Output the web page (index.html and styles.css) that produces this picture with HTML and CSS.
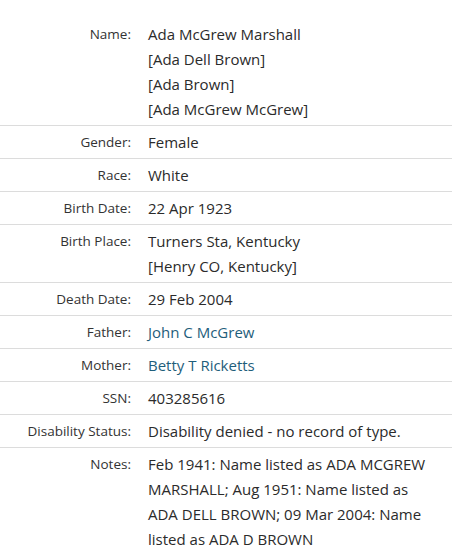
FILE: index.html
```html
<!DOCTYPE html>
<html>
<head>
<meta charset="utf-8">
<link rel="stylesheet" href="styles.css">
</head>
<body>
<div class="record">
  <div class="row">
    <div class="label">Name:</div>
    <div class="value">Ada McGrew Marshall<br>[Ada Dell Brown]<br>[Ada Brown]<br>[Ada McGrew McGrew]</div>
  </div>
  <div class="row">
    <div class="label">Gender:</div>
    <div class="value">Female</div>
  </div>
  <div class="row">
    <div class="label">Race:</div>
    <div class="value">White</div>
  </div>
  <div class="row">
    <div class="label">Birth Date:</div>
    <div class="value">22 Apr 1923</div>
  </div>
  <div class="row">
    <div class="label">Birth Place:</div>
    <div class="value">Turners Sta, Kentucky<br>[Henry CO, Kentucky]</div>
  </div>
  <div class="row">
    <div class="label">Death Date:</div>
    <div class="value">29 Feb 2004</div>
  </div>
  <div class="row">
    <div class="label">Father:</div>
    <div class="value"><a class="link" href="#">John C McGrew</a></div>
  </div>
  <div class="row">
    <div class="label">Mother:</div>
    <div class="value"><a class="link" href="#">Betty T Ricketts</a></div>
  </div>
  <div class="row">
    <div class="label">SSN:</div>
    <div class="value">403285616</div>
  </div>
  <div class="row">
    <div class="label">Disability Status:</div>
    <div class="value">Disability denied - no record of type.</div>
  </div>
  <div class="row last">
    <div class="label">Notes:</div>
    <div class="value">Feb 1941: Name listed as ADA MCGREW MARSHALL; Aug 1951: Name listed as ADA DELL BROWN; 09 Mar 2004: Name listed as ADA D BROWN</div>
  </div>
</div>
</body>
</html>
```

FILE: styles.css
```css
html, body {
  margin: 0;
  padding: 0;
  background: #ffffff;
}
body {
  font-family: "Open Sans", "Liberation Sans", sans-serif;
  color: #2b2b2b;
}
.record {
  width: 452px;
  padding-top: 18px;
}
.row {
  display: grid;
  grid-template-columns: 140px 1fr;
  padding: 4px 0 3px;
  border-bottom: 1px solid #dcdcdc;
}
.row.last {
  border-bottom: none;
}
.label {
  text-align: right;
  padding-right: 9px;
  font-size: 13.5px;
  line-height: 25px;
  color: #333333;
}
.value {
  padding-left: 8px;
  padding-right: 18px;
  font-size: 15px;
  line-height: 25px;
  color: #2b2b2b;
}
.link {
  color: #1f5e7b;
  text-decoration: none;
}
```
